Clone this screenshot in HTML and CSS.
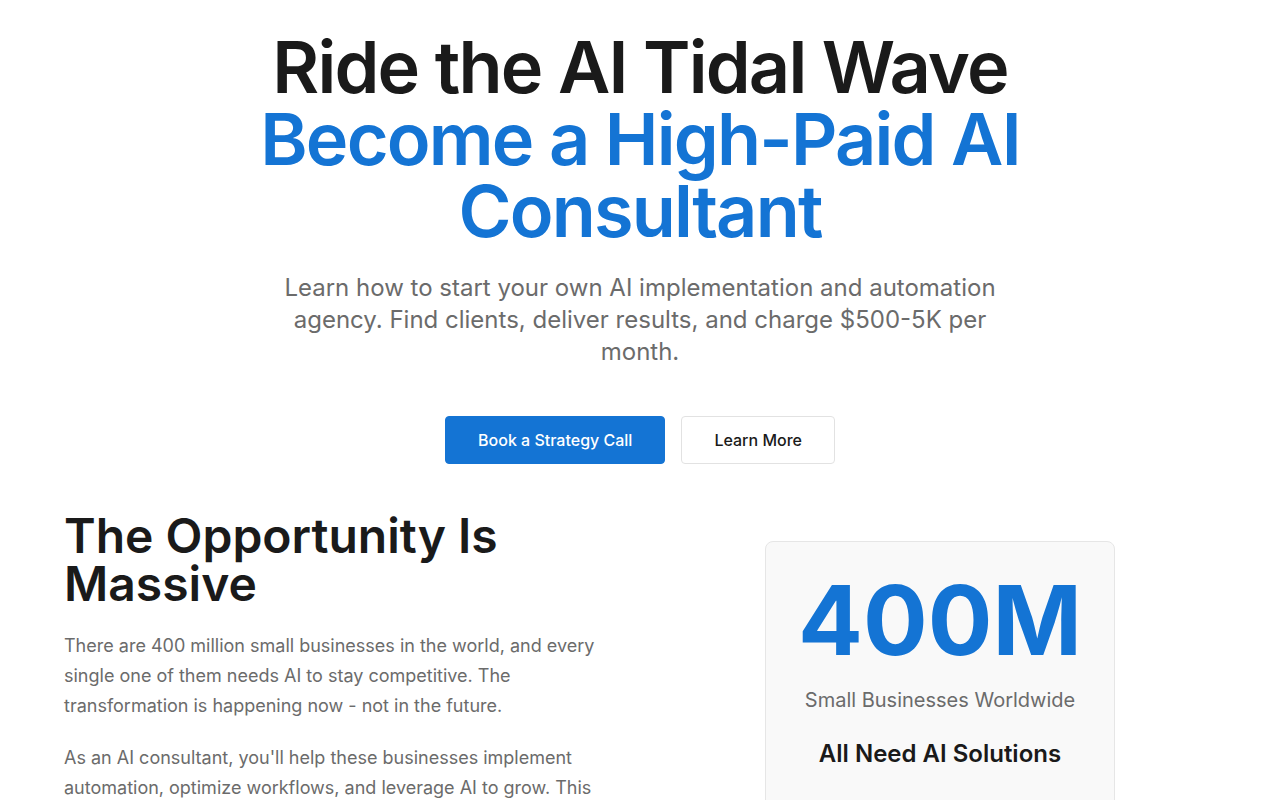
FILE: index.html
```html
<!DOCTYPE html>
<html lang="en">
<head>
<meta charset="utf-8">
<title>Ride the AI Tidal Wave</title>
<link rel="stylesheet" href="styles.css">
</head>
<body>
<section class="hero">
  <h1 class="hero-title">Ride the AI Tidal Wave<br><span class="accent">Become a High-Paid AI Consultant</span></h1>
  <p class="hero-sub">Learn how to start your own AI implementation and automation agency. Find clients, deliver results, and charge $500-5K per month.</p>
  <div class="hero-actions">
    <a class="btn btn-primary" href="#">Book a Strategy Call</a>
    <a class="btn btn-outline" href="#">Learn More</a>
  </div>
</section>
<section class="opportunity">
  <div class="opp-text">
    <h2 class="opp-title">The Opportunity Is Massive</h2>
    <p class="opp-p">There are 400 million small businesses in the world, and every single one of them needs AI to stay competitive. The transformation is happening now - not in the future.</p>
    <p class="opp-p">As an AI consultant, you'll help these businesses implement automation, optimize workflows, and leverage AI to grow. This is the biggest business opportunity of our generation.</p>
  </div>
  <div class="opp-side">
    <div class="stat-card">
      <div class="stat-num">400M</div>
      <div class="stat-label">Small Businesses Worldwide</div>
      <div class="stat-foot">All Need AI Solutions</div>
    </div>
  </div>
</section>
</body>
</html>
```
FILE: styles.css
```css
* { box-sizing: border-box; }
html, body { margin: 0; padding: 0; background: #ffffff; }
body {
  font-family: Inter, "Noto Sans", sans-serif;
  color: #1a1a1a;
}
.hero {
  padding: 31px 64px 0;
  display: flex;
  flex-direction: column;
  align-items: center;
  text-align: center;
}
.hero-title {
  margin: 0;
  font-size: 72px;
  line-height: 72px;
  font-weight: 600;
  letter-spacing: -1.8px;
  max-width: 800px;
  color: #1a1a1a;
}
.accent { color: #1474d4; }
.hero-sub {
  margin: 25px 0 0;
  max-width: 730px;
  font-size: 24px;
  line-height: 32px;
  color: #6b6b6b;
  font-weight: 400;
}
.hero-actions {
  margin-top: 48px;
  display: flex;
  gap: 16px;
}
.btn {
  display: inline-flex;
  align-items: center;
  justify-content: center;
  height: 48px;
  padding: 0 32px;
  border-radius: 4px;
  font-size: 16px;
  font-weight: 500;
  text-decoration: none;
  white-space: nowrap;
}
.btn-primary {
  background: #1474d4;
  color: #ffffff;
  border: 1px solid #1474d4;
}
.btn-outline {
  background: #ffffff;
  color: #1a1a1a;
  border: 1px solid #e2e2e2;
}
.opportunity {
  margin-top: 48px;
  padding: 0 64px;
  display: grid;
  grid-template-columns: 1fr 1fr;
  gap: 48px;
}
.opp-title {
  margin: 0;
  font-size: 48px;
  line-height: 48px;
  font-weight: 600;
  letter-spacing: 0;
  color: #1a1a1a;
}
.opp-p {
  margin: 23px 0 0;
  font-size: 18px;
  line-height: 30px;
  color: #6b6b6b;
  max-width: 540px;
}
.opp-p + .opp-p { margin-top: 22px; }
.opp-side {
  display: flex;
  justify-content: center;
  padding-top: 29px;
}
.stat-card {
  width: 350px;
  background: #f9f9f9;
  border: 1px solid #e6e6e6;
  border-radius: 8px;
  padding: 30px 24px 40px;
  text-align: center;
}
.stat-num {
  font-size: 96px;
  line-height: 96px;
  font-weight: 700;
  color: #1474d4;
}
.stat-label {
  margin-top: 18px;
  font-size: 20px;
  line-height: 28px;
  color: #6b6b6b;
}
.stat-foot {
  margin-top: 24px;
  font-size: 24px;
  line-height: 32px;
  font-weight: 600;
  color: #1a1a1a;
}
```
